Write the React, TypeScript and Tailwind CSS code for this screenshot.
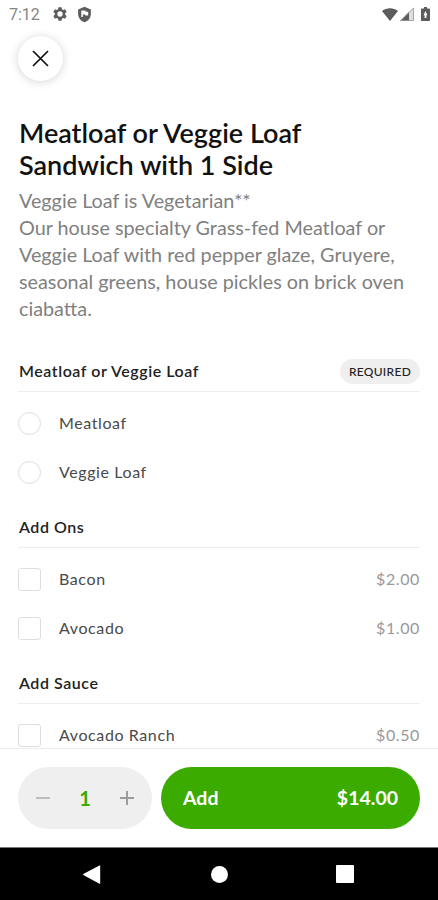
import React, { useState } from 'react';
import clsx from 'clsx';

type Option = { name: string; price?: string };
type Group = { title: string; required?: boolean; options: Option[] };

const GROUPS: Group[] = [
    {
        title: 'Meatloaf or Veggie Loaf',
        required: true,
        options: [{ name: 'Meatloaf' }, { name: 'Veggie Loaf' }],
    },
    {
        title: 'Add Ons',
        options: [{ name: 'Bacon', price: '$2.00' }, { name: 'Avocado', price: '$1.00' }],
    },
    {
        title: 'Add Sauce',
        options: [{ name: 'Avocado Ranch', price: '$0.50' }],
    },
];

function StatusBar() {
    return (
        <div className="flex h-7 shrink-0 items-center pl-[9px] pr-[8px] text-[#5c5c5c]">
            <span className="w-[43px] pt-px font-['Roboto',sans-serif] text-[16px] leading-7 text-[#858585]">7:12</span>
            <svg className="size-4" viewBox="0 0 24 24" fill="currentColor">
                <path fillRule="evenodd" d="M9.6 2h4.8l.5 3 1.9 1.1 2.8-1.1 2.4 4.1-2.3 1.9v2l2.3 1.9-2.4 4.1-2.8-1.1-1.9 1.1-.5 3H9.6l-.5-3-1.9-1.1L4.4 19 2 14.9 4.3 13v-2L2 9.1 4.4 5l2.8 1.1L9.1 5zM12 8a4 4 0 1 0 0 8 4 4 0 0 0 0-8z" />
            </svg>
            <svg className="ml-2 size-[17px]" viewBox="0 0 24 24" fill="currentColor">
                <path fillRule="evenodd" d="M12 1l9 4v6c0 5.500-3.800 10.700-9 12-5.200-1.300-9-6.500-9-12V5zM7.500 6.500v9h2.200v-3.500h3l.5 1.500h4V8h-3.400l-.5-1.500z" />
            </svg>
            <div className="ml-auto flex items-center">
                <svg className="h-[13px] w-4" viewBox="0 0 16 13" fill="currentColor">
                    <path d="M0 3C4.500-.7 11.500-.7 16 3L8 13z" />
                </svg>
                <svg className="ml-[2px] size-[14px]" viewBox="0 0 14 14">
                    <path d="M14 0v14H0z" fill="#dedede" />
                    <path d="M9 5v9H0z" fill="currentColor" />
                    <path d="M13.500 1v12.500H1z" fill="none" stroke="#9a9a9a" strokeWidth="0.800" />
                </svg>
                <svg className="ml-[7px] h-[14px] w-[9px]" viewBox="0 0 9 14" fill="currentColor">
                    <path fillRule="evenodd" d="M3 0h3v1.500h2c.6 0 1 .4 1 1V13c0 .6-.4 1-1 1H1c-.6 0-1-.4-1-1V2.500c0-.6.4-1 1-1h2zM4.500 4L2.600 8.200h1V11h1.800V8.200h1z" />
                </svg>
            </div>
        </div>
    );
}

function OptionGroup({ group }: { group: Group }) {
    return (
        <section className="mb-[11px]">
            <div className="flex h-10 items-center justify-between border-b border-[#ededed]">
                <h2 className="pb-px pl-px text-[16px] font-semibold leading-6 tracking-[0.55px] text-[#222]">{group.title}</h2>
                {group.required && (
                    <span className="flex h-[25px] w-20 items-center justify-center rounded-full bg-[#efefef] text-[12px] font-medium tracking-[0.3px] text-[#222]">
                        REQUIRED
                    </span>
                )}
            </div>
            <div className="pt-[7px]">
                {group.options.map(option => (
                    <label key={option.name} className="flex h-[49px] items-center text-[16px] leading-6 tracking-[0.6px]">
                        <input
                            type={group.required ? 'radio' : 'checkbox'}
                            name={group.title}
                            className={clsx(
                                'size-[23px] appearance-none border-[1.5px] border-[#dedede] bg-white checked:border-[#3bab00] checked:bg-[#3bab00]',
                                group.required ? 'rounded-full' : 'rounded-[3px]',
                            )}
                        />
                        <span className="ml-[18px] pb-px text-[#4a4a4a]">{option.name}</span>
                        <span className="ml-auto pb-px text-[#999]">{option.price}</span>
                    </label>
                ))}
            </div>
        </section>
    );
}

function NavBar() {
    return (
        <nav className="flex h-[53px] shrink-0 items-center justify-between border-t border-[#777] bg-black pl-[83px] pr-[84px] text-white">
            <svg className="h-[19px] w-[18px]" viewBox="0 0 18 19" fill="currentColor">
                <path d="M16.500.4.700 8.700a.8.8 0 0 0 0 1.500l15.800 8.500c.4.200.7 0 .7-.5V.9c0-.5-.3-.7-.7-.5z" />
            </svg>
            <span className="ml-px size-[17px] rounded-full bg-white" />
            <span className="size-[18px] rounded-[1px] bg-white" />
        </nav>
    );
}

export default function App() {
    const [quantity, setQuantity] = useState(1);

    return (
        <div className="flex h-[900px] w-[438px] flex-col overflow-hidden bg-white font-['Lato',sans-serif]">
            <StatusBar />
            <main className="min-h-0 flex-1 overflow-hidden px-[18px] pt-2">
                <button aria-label="Close" className="flex size-[45px] items-center justify-center rounded-full bg-white shadow-[0_1px_10px_rgba(0,0,0,0.17)]">
                    <svg className="size-[17px]" viewBox="0 0 17 17" fill="none" stroke="#111" strokeWidth="1.700">
                        <path d="M1 1l15 15M16 1L1 16" />
                    </svg>
                </button>
                <h1 className="mt-9 pl-px text-[27px] font-semibold leading-8 text-[#111]">
                    Meatloaf or Veggie Loaf<br />Sandwich with 1 Side
                </h1>
                <p className="mt-1.5 whitespace-nowrap pl-px text-[19.8px] leading-[27px] text-[#808080]">
                    Veggie Loaf is Vegetarian**<br />
                    Our house specialty Grass-fed Meatloaf or<br />
                    Veggie Loaf with red pepper glaze, Gruyere,<br />
                    seasonal greens, house pickles on brick oven<br />
                    ciabatta.
                </p>
                <div className="mt-[30px]">
                    {GROUPS.map(group => <OptionGroup key={group.title} group={group} />)}
                </div>
            </main>
            <footer className="flex h-[99px] shrink-0 gap-[9px] border-t border-[#ededed] bg-white px-[18px] pt-[18px]">
                <div className="flex h-[62px] w-[134px] items-center justify-between rounded-full bg-[#efefef] px-[18px]">
                    <button aria-label="Remove one" onClick={() => setQuantity(Math.max(1, quantity - 1))}>
                        <svg className="size-[14px]" viewBox="0 0 14 14" stroke="#bdbdbd" strokeWidth="2">
                            <path d="M0 7h14" />
                        </svg>
                    </button>
                    <span className="text-[20px] font-bold text-[#3bab00]">{quantity}</span>
                    <button aria-label="Add one" onClick={() => setQuantity(quantity + 1)}>
                        <svg className="size-[14px]" viewBox="0 0 14 14" stroke="#9b9b9b" strokeWidth="2">
                            <path d="M0 7h14M7 0v14" />
                        </svg>
                    </button>
                </div>
                <button className="flex h-[62px] flex-1 items-center justify-between rounded-full bg-[#3bab00] px-[22px] text-[19.5px] font-bold text-white">
                    <span>Add</span>
                    <span>${(14 * quantity).toFixed(2)}</span>
                </button>
            </footer>
            <NavBar />
        </div>
    );
}
